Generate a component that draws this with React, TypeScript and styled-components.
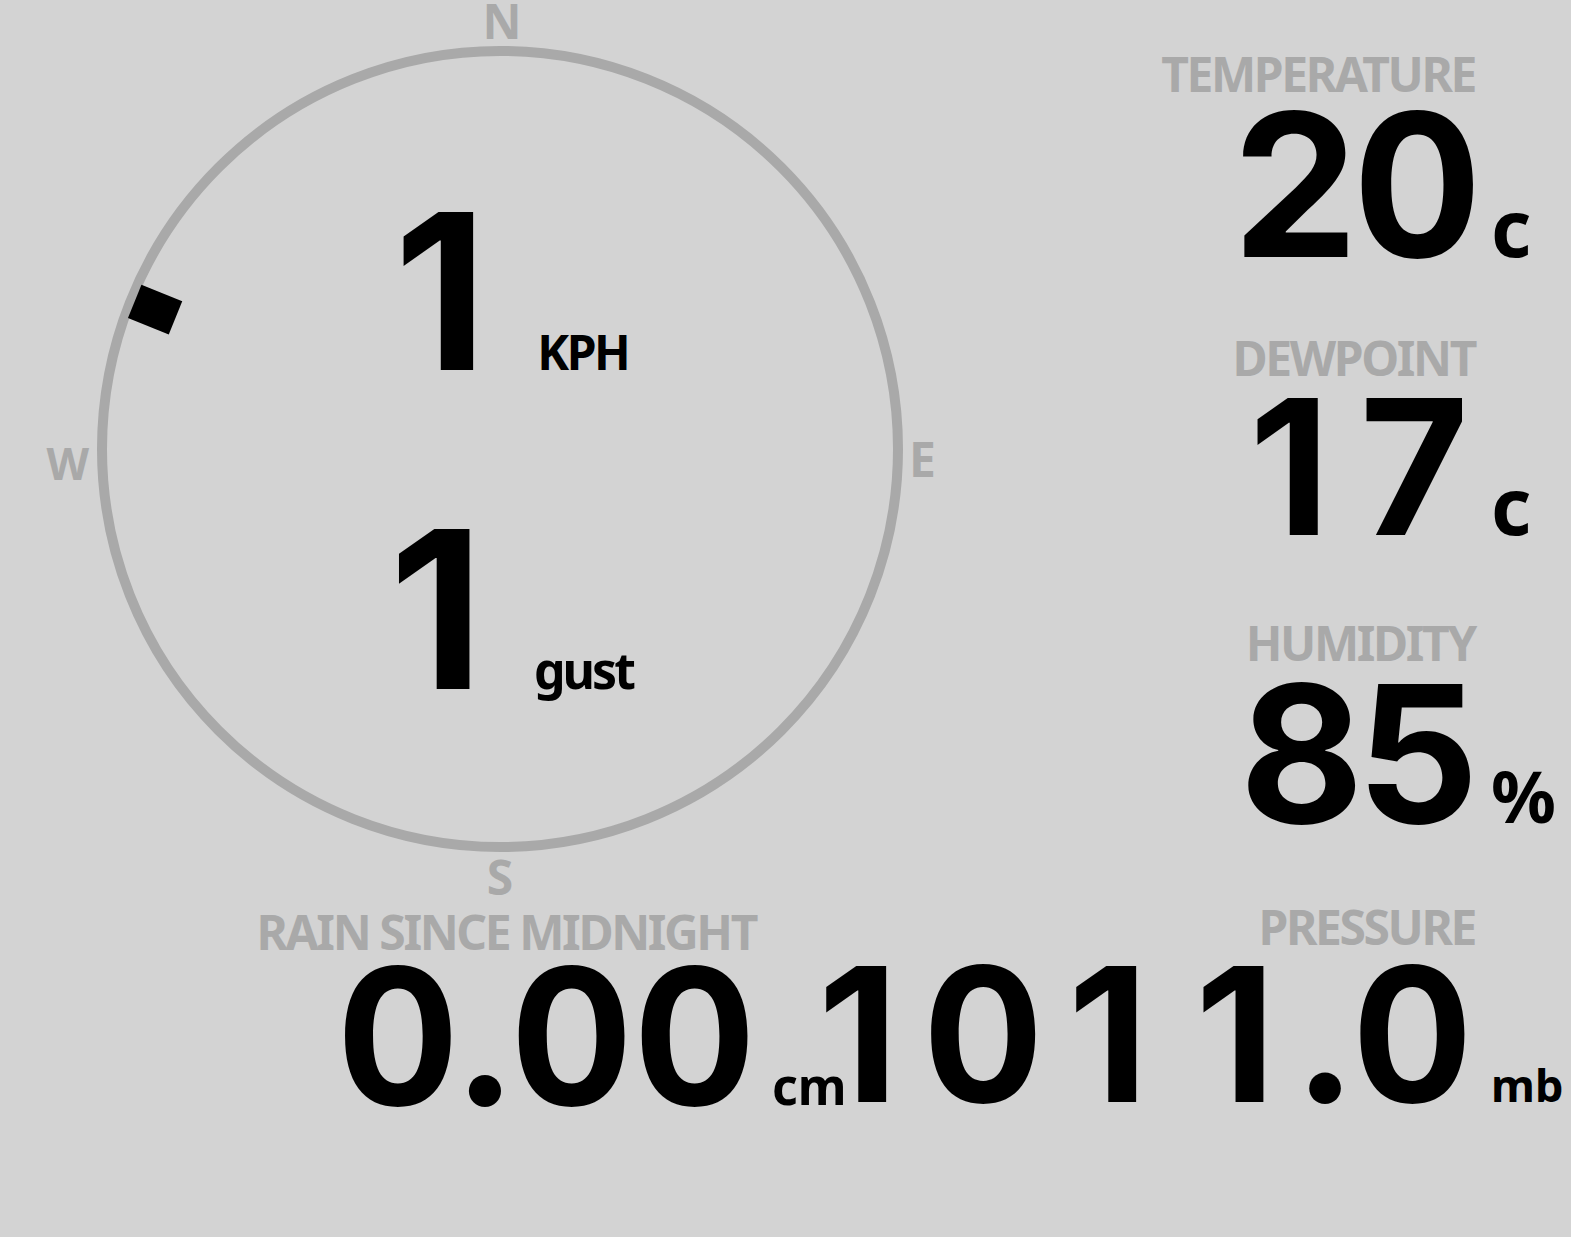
import React from "react";
import styled, { createGlobalStyle } from "styled-components";

const GlobalStyle = createGlobalStyle`
  html, body { margin: 0; padding: 0; background: #d3d3d3; }
  body { font-family: "Noto Sans", sans-serif; overflow: hidden; }
`;

const Page = styled.main`
  width: 1571px;
  height: 1237px;
  display: grid;
  grid-template-columns: 1000px 571px;
  grid-template-rows: 903px 1fr;
`;

const Compass = styled.section`
  display: grid;
  grid-template-columns: 97px 806px 1fr;
  grid-template-rows: 46px 806px 1fr;
`;

const Ring = styled.svg`
  grid-area: 2 / 2;
  width: 806px;
  height: 806px;
  display: block;
`;

const Cardinal = styled.span<{ $area: string; $justify: string; $align: string; $shift?: string; $size?: number }>`
  grid-area: ${(p) => p.$area};
  justify-self: ${(p) => p.$justify};
  align-self: ${(p) => p.$align};
  margin: ${(p) => p.$shift || "0"};
  font-family: "Noto Sans", sans-serif;
  font-weight: 700;
  font-size: ${(p) => p.$size ?? 48}px;
  line-height: 0.85;
  color: #a9a9a9;
`;

const Wind = styled.div`
  grid-area: 2 / 2;
  display: flex;
  flex-direction: column;
  justify-content: center;
  align-items: center;
  gap: 155px;
  padding: 4px 0 0 22px;
`;

const WindRow = styled.div`
  display: flex;
  align-items: baseline;
  gap: 50px;
`;

const BigNumber = styled.span<{ $size: number }>`
  font-family: Inter, "Noto Sans", sans-serif;
  font-weight: 700;
  font-size: ${(p) => p.$size}px;
  line-height: 0.75;
  font-feature-settings: "tnum" 1;
  color: #000;
`;

const WindNumber = styled(BigNumber)`
  font-feature-settings: normal;
`;

const OneCell = styled.span`
  display: inline-block;
  width: 0.68em;
  text-align: center;
  font-feature-settings: normal;
`;

const WindUnit = styled.span<{ $size: number; $spacing: number }>`
  font-family: "Noto Sans", sans-serif;
  font-weight: 700;
  font-size: ${(p) => p.$size}px;
  line-height: 0.75;
  letter-spacing: ${(p) => p.$spacing}px;
  color: #000;
`;

const StatColumn = styled.div`
  display: flex;
  flex-direction: column;
  align-items: flex-end;
  padding-top: 56px;
`;

const Stat = styled.div<{ $unitWidth?: number; $mr?: number; $mt?: number }>`
  display: grid;
  width: max-content;
  flex-shrink: 0;
  grid-template-columns: auto ${(p) => p.$unitWidth ?? 80}px;
  column-gap: 16px;
  margin-top: ${(p) => p.$mt ?? 0}px;
  margin-right: ${(p) => p.$mr ?? 0}px;
`;

const Label = styled.div`
  grid-column: 1;
  grid-row: 1;
  justify-self: end;
  font-family: "Noto Sans", sans-serif;
  font-weight: 700;
  font-size: 48px;
  line-height: 36px;
  letter-spacing: -2.4px;
  color: #a9a9a9;
  white-space: nowrap;
`;

const Value = styled(BigNumber)<{ $mt: number; $spacing?: number }>`
  grid-column: 1;
  grid-row: 2;
  justify-self: end;
  align-self: baseline;
  margin-top: ${(p) => p.$mt}px;
  letter-spacing: ${(p) => p.$spacing ?? 0}px;
  white-space: nowrap;
`;

const Unit = styled.span<{ $size: number }>`
  grid-column: 2;
  grid-row: 2;
  align-self: baseline;
  font-family: "Noto Sans", sans-serif;
  font-weight: 700;
  font-size: ${(p) => p.$size}px;
  line-height: 0.75;
  color: #000;
`;

const BottomCell = styled.div`
  display: flex;
  justify-content: flex-end;
  align-items: flex-start;
`;

function Figures({ text }: { text: string }) {
  return (
    <>
      {text.split("").map((ch, i) =>
        ch === "1" ? <OneCell key={i}>1</OneCell> : <React.Fragment key={i}>{ch}</React.Fragment>
      )}
    </>
  );
}

type StatProps = {
  label: string;
  value: string;
  unit: string;
  size: number;
  unitSize: number;
  valueOffset: number;
  spacing?: number;
  top?: number;
  right?: number;
  unitWidth?: number;
};

function Reading({ label, value, unit, size, unitSize, valueOffset, spacing, top, right, unitWidth }: StatProps) {
  return (
    <Stat $mt={top} $mr={right} $unitWidth={unitWidth}>
      <Label>{label}</Label>
      <Value $size={size} $mt={valueOffset} $spacing={spacing}>
        <Figures text={value} />
      </Value>
      <Unit $size={unitSize}>{unit}</Unit>
    </Stat>
  );
}

export default function App() {
  const dir = 292;
  const rad = ((dir - 90) * Math.PI) / 180;
  const r = 372;
  const px = 403 + r * Math.cos(rad);
  const py = 403 + r * Math.sin(rad);
  return (
    <>
      <GlobalStyle />
      <Page>
        <Compass>
          <Cardinal $area="1 / 2" $justify="center" $align="start" $shift="1px 0 0 4px">
            N
          </Cardinal>
          <Cardinal $area="2 / 1" $justify="end" $align="center" $shift="30px 8px 0 0" $size={44}>
            W
          </Cardinal>
          <Cardinal $area="2 / 3" $justify="start" $align="center" $shift="21px 0 0 6px">
            E
          </Cardinal>
          <Cardinal $area="3 / 2" $justify="center" $align="start" $shift="5px 0 0 0">
            S
          </Cardinal>
          <Ring viewBox="0 0 806 806">
            <circle cx="403" cy="403" r="398" fill="none" stroke="#a9a9a9" strokeWidth="10" />
            <rect
              x="-22"
              y="-18"
              width="44"
              height="36"
              fill="#000"
              transform={`translate(${px.toFixed(1)} ${py.toFixed(1)}) rotate(${dir - 270})`}
            />
          </Ring>
          <Wind>
            <WindRow>
              <WindNumber $size={217}>1</WindNumber>
              <WindUnit $size={48} $spacing={-2.5}>
                KPH
              </WindUnit>
            </WindRow>
            <WindRow>
              <WindNumber $size={220}>1</WindNumber>
              <WindUnit $size={50} $spacing={-3}>
                gust
              </WindUnit>
            </WindRow>
          </Wind>
        </Compass>
        <StatColumn>
          <Reading label="TEMPERATURE" value="20" unit="c" size={200} unitSize={78} valueOffset={17} spacing={-7} />
          <Reading label="DEWPOINT" value="17" unit="c" size={188} unitSize={78} valueOffset={20} top={81} />
          <Reading label="HUMIDITY" value="85" unit="%" size={191} unitSize={72} valueOffset={21} top={88} spacing={-6} />
        </StatColumn>
        <BottomCell>
          <Reading
            label="RAIN SINCE MIDNIGHT"
            value="0.00"
            unit="cm"
            size={190}
            unitSize={50}
            valueOffset={15}
            top={11}
            right={163}
            unitWidth={65}
          />
        </BottomCell>
        <BottomCell>
          <Reading label="PRESSURE" value="1011.0" unit="mb" size={187} unitSize={45} valueOffset={19} top={6} spacing={2} />
        </BottomCell>
      </Page>
    </>
  );
}
